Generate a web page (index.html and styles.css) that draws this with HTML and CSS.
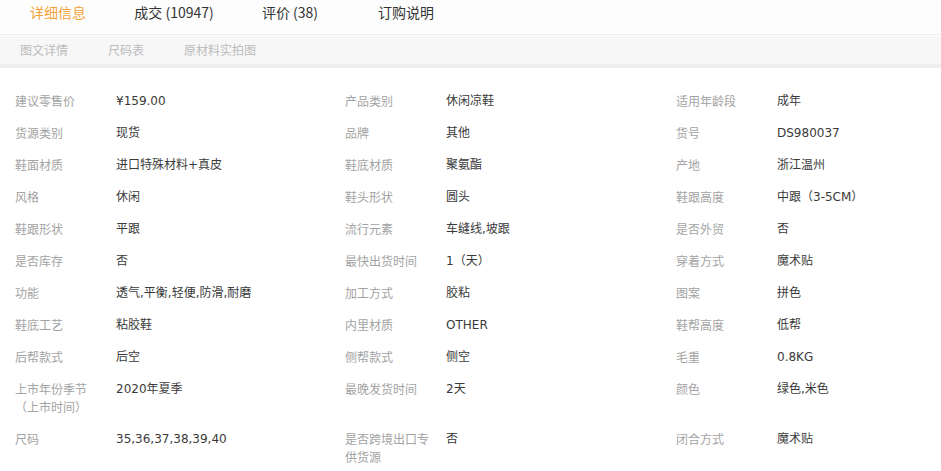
FILE: index.html
```
<!DOCTYPE html>
<html lang="zh-CN">
<head>
<meta charset="utf-8">
<title>详细信息</title>
<link rel="stylesheet" href="styles.css">
</head>
<body>
<div class="page">
  <div class="tabs">
    <div class="tab active">详细信息</div>
    <div class="tab">成交 (10947)</div>
    <div class="tab">评价 (38)</div>
    <div class="tab">订购说明</div>
  </div>
  <div class="subnav">
    <span class="sub">图文详情</span>
    <span class="sub">尺码表</span>
    <span class="sub">原材料实拍图</span>
  </div>
  <div class="attrs">
    <div class="cell"><span class="k">建议零售价</span><span class="v">¥159.00</span></div>
    <div class="cell"><span class="k">产品类别</span><span class="v">休闲凉鞋</span></div>
    <div class="cell"><span class="k">适用年龄段</span><span class="v">成年</span></div>

    <div class="cell"><span class="k">货源类别</span><span class="v">现货</span></div>
    <div class="cell"><span class="k">品牌</span><span class="v">其他</span></div>
    <div class="cell"><span class="k">货号</span><span class="v">DS980037</span></div>

    <div class="cell"><span class="k">鞋面材质</span><span class="v">进口特殊材料+真皮</span></div>
    <div class="cell"><span class="k">鞋底材质</span><span class="v">聚氨酯</span></div>
    <div class="cell"><span class="k">产地</span><span class="v">浙江温州</span></div>

    <div class="cell"><span class="k">风格</span><span class="v">休闲</span></div>
    <div class="cell"><span class="k">鞋头形状</span><span class="v">圆头</span></div>
    <div class="cell"><span class="k">鞋跟高度</span><span class="v">中跟（3-5CM）</span></div>

    <div class="cell"><span class="k">鞋跟形状</span><span class="v">平跟</span></div>
    <div class="cell"><span class="k">流行元素</span><span class="v">车缝线,坡跟</span></div>
    <div class="cell"><span class="k">是否外贸</span><span class="v">否</span></div>

    <div class="cell"><span class="k">是否库存</span><span class="v">否</span></div>
    <div class="cell"><span class="k">最快出货时间</span><span class="v">1（天）</span></div>
    <div class="cell"><span class="k">穿着方式</span><span class="v">魔术贴</span></div>

    <div class="cell"><span class="k">功能</span><span class="v">透气,平衡,轻便,防滑,耐磨</span></div>
    <div class="cell"><span class="k">加工方式</span><span class="v">胶粘</span></div>
    <div class="cell"><span class="k">图案</span><span class="v">拼色</span></div>

    <div class="cell"><span class="k">鞋底工艺</span><span class="v">粘胶鞋</span></div>
    <div class="cell"><span class="k">内里材质</span><span class="v">OTHER</span></div>
    <div class="cell"><span class="k">鞋帮高度</span><span class="v">低帮</span></div>

    <div class="cell"><span class="k">后帮款式</span><span class="v">后空</span></div>
    <div class="cell"><span class="k">侧帮款式</span><span class="v">侧空</span></div>
    <div class="cell"><span class="k">毛重</span><span class="v">0.8KG</span></div>

    <div class="cell"><span class="k">上市年份季节（上市时间）</span><span class="v">2020年夏季</span></div>
    <div class="cell"><span class="k">最晚发货时间</span><span class="v">2天</span></div>
    <div class="cell"><span class="k">颜色</span><span class="v">绿色,米色</span></div>

    <div class="cell"><span class="k">尺码</span><span class="v">35,36,37,38,39,40</span></div>
    <div class="cell"><span class="k">是否跨境出口专供货源</span><span class="v">否</span></div>
    <div class="cell"><span class="k">闭合方式</span><span class="v">魔术贴</span></div>
  </div>
</div>
</body>
</html>
```
FILE: styles.css
```
html, body {
  margin: 0;
  padding: 0;
  background: #fff;
}
body {
  font-family: "Noto Sans CJK SC", "Noto Sans", sans-serif;
  font-size: 12px;
  color: #333;
}
.page {
  width: 941px;
}
.tabs {
  display: flex;
  height: 34px;
  background: #fdfdfd;
  border-bottom: 1px solid #ececec;
}
.tab {
  width: 116px;
  text-align: center;
  font-size: 14px;
  line-height: 20px;
  padding-top: 2px;
  color: #333;
}
.tab.active {
  color: #f2a33c;
}
.subnav {
  display: flex;
  height: 28px;
  margin-top: 1px;
  align-items: center;
  background: #f7f7f7;
  border-bottom: 4px solid #efefef;
}
.sub {
  padding: 0 20px;
  color: #bbb;
  font-size: 12px;
  line-height: 18px;
}
.attrs {
  display: grid;
  grid-template-columns: 330px 331px 280px;
  padding: 17px 0 0 15px;
}
.cell {
  display: flex;
  align-items: flex-start;
  padding: 7px 0;
  line-height: 18px;
}
.k {
  width: 90px;
  margin-right: 11px;
  color: #a3a3a3;
  flex: none;
}
.v {
  font-family: "DejaVu Sans", "Noto Sans CJK SC", sans-serif;
  color: #3a3a3a;
}
```
